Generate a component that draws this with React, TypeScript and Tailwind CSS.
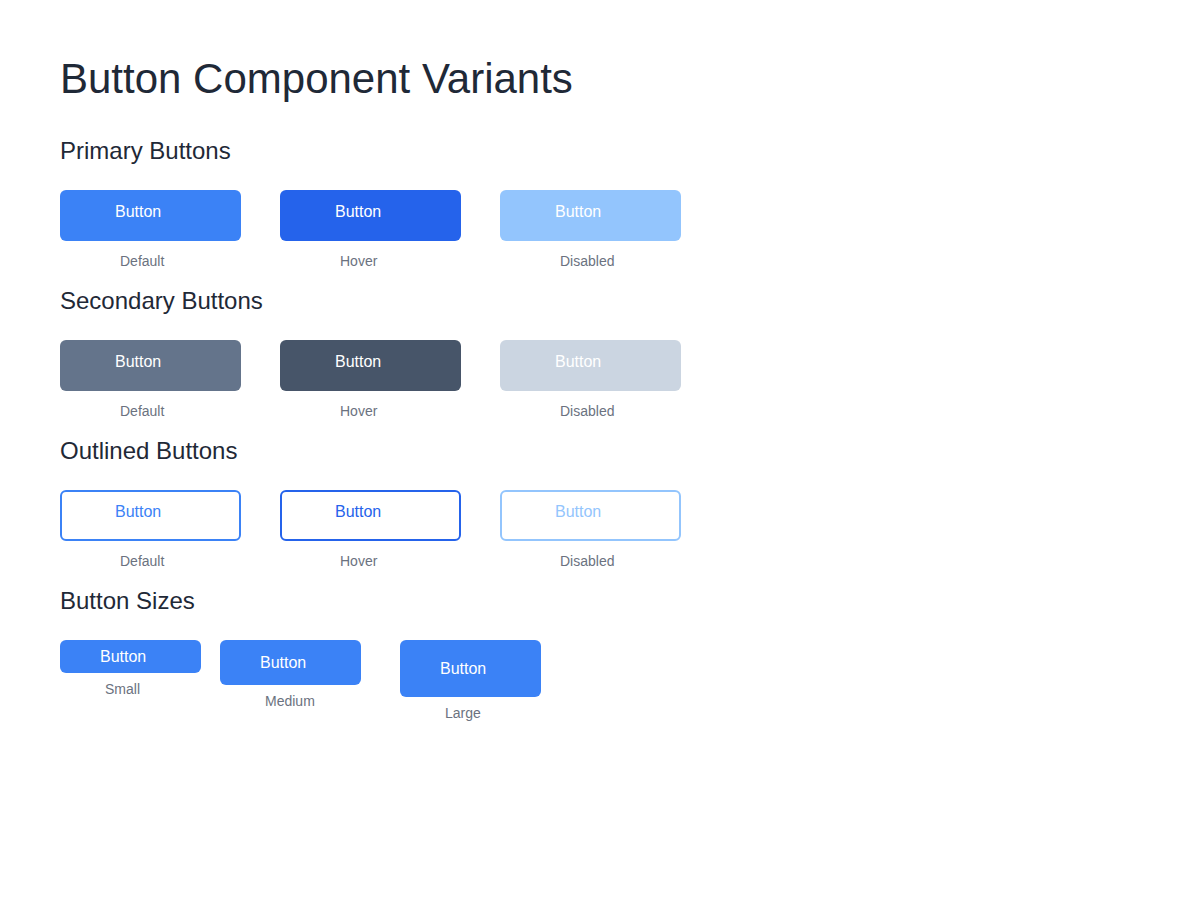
import React from "react";

type Variant = {
  label: string;
  className: string;
  outlined?: boolean;
};

interface Section {
  title: string;
  variants: Variant[];
}

const sections: Section[] = [
  {
    title: "Primary Buttons",
    variants: [
      { label: "Default", className: "bg-[#3b82f6] text-white" },
      { label: "Hover", className: "bg-[#2563eb] text-white" },
      { label: "Disabled", className: "bg-[#93c5fd] text-white" },
    ],
  },
  {
    title: "Secondary Buttons",
    variants: [
      { label: "Default", className: "bg-[#64748b] text-white" },
      { label: "Hover", className: "bg-[#475569] text-white" },
      { label: "Disabled", className: "bg-[#cbd5e1] text-white" },
    ],
  },
  {
    title: "Outlined Buttons",
    variants: [
      { label: "Default", className: "bg-white border-2 border-[#3b82f6] text-[#3b82f6]", outlined: true },
      { label: "Hover", className: "bg-white border-2 border-[#2563eb] text-[#2563eb]", outlined: true },
      { label: "Disabled", className: "bg-white border-2 border-[#93c5fd] text-[#93c5fd]", outlined: true },
    ],
  },
];

const sizes = [
  { label: "Small", col: "w-[160px]", height: "h-[33px]" },
  { label: "Medium", col: "w-[180px]", height: "h-[45px]" },
  { label: "Large", col: "w-[141px]", height: "h-[57px]" },
];

function SectionTitle({ children }: { children: React.ReactNode }) {
  return <h2 className="text-[24px] leading-8 text-[#1f2937]">{children}</h2>;
}

export default function App() {
  return (
    <div
      className="min-h-[900px] w-[1200px] bg-white pl-[60px] pt-[55px]"
      style={{ fontFamily: '"Liberation Sans", Arial, sans-serif' }}>
      <h1 className="mb-[32px] text-[42px] leading-[48px] text-[#1f2937]">
        Button Component Variants
      </h1>

      {sections.map((section) => (
        <section key={section.title} className="mb-[14px]">
          <SectionTitle>{section.title}</SectionTitle>
          <div className="mt-[23px] flex">
            {section.variants.map((v) => (
              <div key={v.label} className="w-[220px]">
                <button
                  className={`box-border block h-[51px] w-[181px] rounded-[6px] text-left ${v.className}`}>
                  <span
                    className={`block h-full text-[16px] leading-5 ${
                      v.outlined ? "pl-[53px] pt-[10px]" : "pl-[55px] pt-3"
                    }`}>
                    Button
                  </span>
                </button>
                <div className="mt-[10px] pl-[60px] text-[14px] leading-5 text-[#6b7280]">
                  {v.label}
                </div>
              </div>
            ))}
          </div>
        </section>
      ))}

      <section>
        <SectionTitle>Button Sizes</SectionTitle>
        <div className="mt-[23px] flex items-start">
          {sizes.map((s) => (
            <div key={s.label} className={s.col}>
              <button
                className={`flex w-[141px] items-center rounded-[6px] bg-[#3b82f6] pl-[40px] text-[16px] leading-5 text-white ${s.height}`}>
                Button
              </button>
              <div className="mt-[6px] pl-[45px] text-[14px] leading-5 text-[#6b7280]">
                {s.label}
              </div>
            </div>
          ))}
        </div>
      </section>
    </div>
  );
}
